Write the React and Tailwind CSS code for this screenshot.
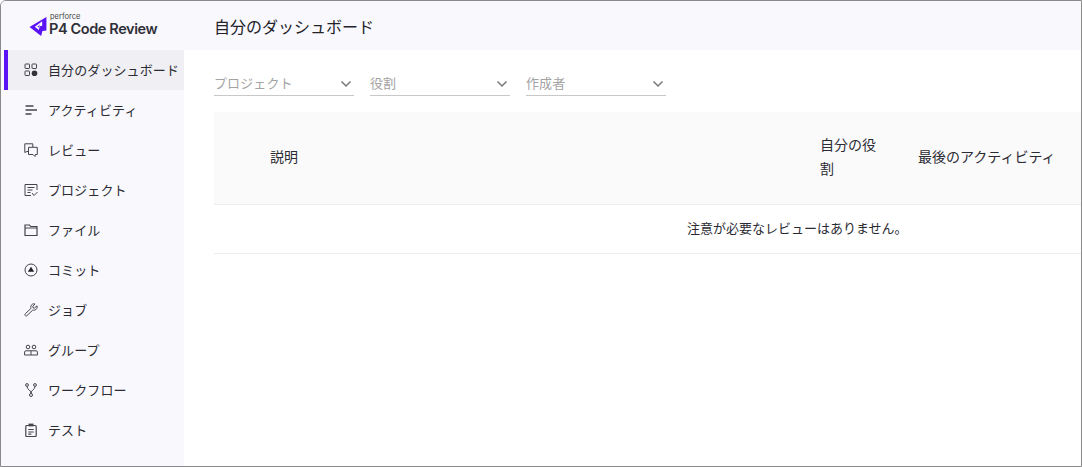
const nav = [
  ["自分のダッシュボード", "dash"],
  ["アクティビティ", "activity"],
  ["レビュー", "review"],
  ["プロジェクト", "project"],
  ["ファイル", "file"],
  ["コミット", "commit"],
  ["ジョブ", "job"],
  ["グループ", "group"],
  ["ワークフロー", "flow"],
  ["テスト", "test"],
];

function Icon({ name }) {
  const p = { width: 14, height: 14, viewBox: "0 0 14 14", fill: "none", stroke: "#44444c", strokeWidth: 1 };
  switch (name) {
    case "dash":
      return (
        <svg {...p}>
          <rect x="1" y="1" width="4.500" height="4.500" rx=".6" />
          <rect x="8" y="1" width="4.500" height="4.500" rx=".6" />
          <rect x="1" y="8" width="4.500" height="4.500" rx=".6" />
          <circle cx="10.500" cy="10.300" r="2.800" fill="#33333a" stroke="none" />
        </svg>
      );
    case "activity":
      return (
        <svg {...p} strokeWidth="1.300">
          <path d="M1.500 3h8M1.500 7h11.500M1.500 11h6" />
        </svg>
      );
    case "review":
      return (
        <svg {...p}>
          <path d="M4.500 8.500H3L.8 9.500V.8h8V4" />
          <path d="M4.500 4.300h8.800v7.200h-2l-.3 2-2-2H4.500z" />
        </svg>
      );
    case "project":
      return (
        <svg {...p}>
          <path d="M7 12.500H1v-11h12V7" />
          <path d="M3.500 4.500h7M3.500 7h5M3.500 9.500h3M8 10l2 2.500 3.500-3.500" />
        </svg>
      );
    case "file":
      return (
        <svg {...p} strokeWidth="1.200">
          <path d="M1 12.500V2h4.500l1.200 1.500H13v9z" />
          <path d="M1 5h12" />
        </svg>
      );
    case "commit":
      return (
        <svg {...p}>
          <circle cx="7" cy="7" r="6" />
          <path d="M7 3.800l3.200 5H3.800z" fill="#22222a" stroke="none" />
        </svg>
      );
    case "job":
      return (
        <svg {...p}>
          <path d="M13 2.800 10.500 5 9 4.800 8.800 3.300 11 1C9.200.300 7 1.500 6.800 3.500c0 .7 0 1.200.3 1.700L1.300 10.800c-.6.600-.6 1.300 0 1.800s1.200.500 1.700 0l5.800-5.600c.6.200 1.200.300 1.800.100 2-.400 3-2.500 2.400-4.300z" />
        </svg>
      );
    case "group":
      return (
        <svg {...p}>
          <circle cx="4" cy="4" r="1.800" />
          <circle cx="10" cy="4" r="1.800" />
          <path d="M.6 12V9c0-.7.500-1.200 1.200-1.200h10.400c.7 0 1.200.5 1.200 1.200v3zM7 7.800V12" />
        </svg>
      );
    case "flow":
      return (
        <svg {...p}>
          <circle cx="3" cy="2" r="1.400" />
          <circle cx="11" cy="2" r="1.400" />
          <circle cx="7" cy="12" r="1.500" />
          <path d="M3 3.400C3 7 7 6.500 7 10.500M11 3.400C11 7 7 6.500 7 10.500" />
        </svg>
      );
    default:
      return (
        <svg {...p} strokeWidth="1.200">
          <rect x="1.800" y="2.500" width="10.400" height="11" rx="1" />
          <rect x="4.500" y=".6" width="5" height="2.800" fill="#44444c" stroke="none" />
          <path d="M4.300 6.500h5.400M4.300 9h5.400M4.300 11.200h3" />
        </svg>
      );
  }
}

function Chevron() {
  return (
    <svg width="12" height="8" viewBox="0 0 12 8" fill="none" stroke="#77777c" strokeWidth="1.500">
      <path d="M1.500 1.500 6 6l4.500-4.500" />
    </svg>
  );
}

function Select({ label }) {
  return (
    <div className="w-[140px] h-[24px] flex items-center justify-between border-b border-[#c8c8c8] text-[13px] text-[#a3a3a3] pr-[2px]">
      <span className="-mt-[2px] tracking-[0.1px]">{label}</span>
      <Chevron />
    </div>
  );
}

export default function App() {
  return (
    <div
      className="w-[1082px] h-[467px] border border-[#8a8a8a] rounded-tl-[6px] overflow-hidden flex flex-col bg-white text-[#2b2b33]"
      style={{ fontFamily: '"Noto Sans CJK JP", "Inter", sans-serif' }}
    >
      <div className="flex flex-1 min-h-0">
        <aside className="w-[183px] shrink-0 bg-[#f8f8fd] flex flex-col">
          <div className="h-[49px] pl-[28px] pb-[3px] flex items-center gap-[1px]">
            <svg width="19" height="19" viewBox="0 0 18 18" className="mt-[4px]">
              <path d="M16.500 0 .5 9.500 11.500 18l1.200-4.700 3.800-.6z" fill="#5b12f5" />
              <path d="M12.500 4 5.500 9.300l3.800 2.900.8-3.500 2.400-.5z" fill="#f8f8fd" />
              <path d="M10.500 7.200 8 9.300l1 .7z" fill="#5b12f5" />
            </svg>
            <div className="flex flex-col" style={{ fontFamily: "Inter, sans-serif" }}>
              <span className="text-[7.500px] leading-[7px] text-[#444] mt-[1px] ml-[1px]">perforce</span>
              <span className="text-[14.500px] leading-[17px] font-semibold tracking-[-0.4px] text-[#303038]">P4 Code Review</span>
            </div>
          </div>
          <nav className="flex flex-col">
            {nav.map(([label, icon], i) => (
              <div
                key={label}
                className={
                  "h-[40px] flex items-center text-[13px] tracking-[0.1px] ml-[3px] pl-[16px] gap-[10px] whitespace-nowrap border-l-[4px] " +
                  (i === 0 ? "border-[#5b12f5] bg-[#efeff4]" : "border-transparent")
                }
              >
                <Icon name={icon} />
                <span className="-mt-[1px]">{label}</span>
              </div>
            ))}
          </nav>
        </aside>
        <main className="flex-1 min-w-0 flex flex-col">
          <header className="h-[49px] bg-[#f8f8fd] flex items-center pl-[30px] text-[16px] text-[#222228]">自分のダッシュボード</header>
          <div className="pl-[30px] pt-[22px] flex flex-col">
            <div className="flex gap-[16px]">
              <Select label="プロジェクト" />
              <Select label="役割" />
              <Select label="作成者" />
            </div>
            <div className="mt-[16px] h-[93px] bg-[#fafafa] border-b border-[#ececec] flex items-center text-[14px] text-[#2b2b33]">
              <div className="w-[606px] pl-[56px] -mt-[3px]">説明</div>
              <div className="w-[98px] leading-[24px] -mt-[5px]">
                自分の役<br />割
              </div>
              <div className="flex-1 whitespace-nowrap -mt-[3px]">最後のアクティビティ</div>
            </div>
            <div className="h-[49px] border-b border-[#ececec] flex items-center pl-[473px] text-[13px] pb-[3px]">注意が必要なレビューはありません。</div>
          </div>
        </main>
      </div>
    </div>
  );
}
